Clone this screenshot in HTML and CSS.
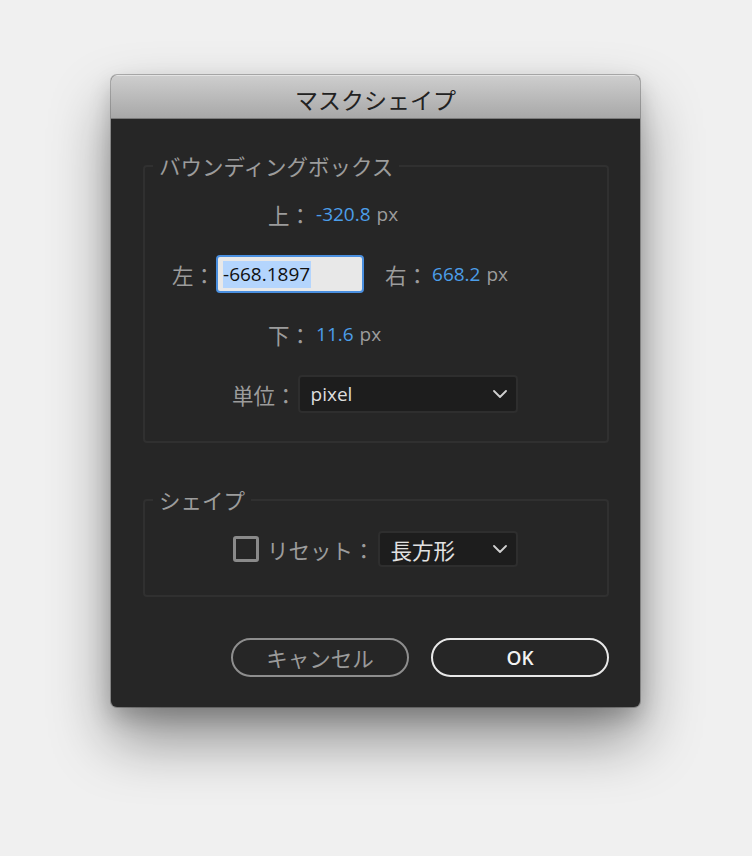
FILE: index.html
```html
<!DOCTYPE html>
<html lang="ja">
<head>
<meta charset="utf-8">
<title>マスクシェイプ</title>
<link rel="stylesheet" href="styles.css">
</head>
<body>
<div class="window">
  <div class="titlebar">マスクシェイプ</div>
  <div class="content">
    <fieldset class="group group-bbox">
      <legend class="group-label">バウンディングボックス</legend>
      <div class="row row-top">
        <span class="label">上：</span><span class="value">-320.8</span><span class="unit">px</span>
      </div>
      <div class="row row-mid">
        <span class="label label-left">左：</span>
        <div class="field"><span class="sel">-668.1897</span></div>
        <span class="label label-right">右：</span><span class="value">668.2</span><span class="unit">px</span>
      </div>
      <div class="row row-bottom">
        <span class="label">下：</span><span class="value">11.6</span><span class="unit">px</span>
      </div>
      <div class="row row-unit">
        <span class="label label-unit">単位：</span>
        <div class="select select-unit">
          <span class="select-text latin">pixel</span>
          <svg class="chevron" width="14" height="8" viewBox="0 0 14 8"><polyline points="1,1 7,7 13,1" fill="none" stroke="#d0d0d0" stroke-width="1.8" stroke-linecap="round" stroke-linejoin="round"/></svg>
        </div>
      </div>
    </fieldset>
    <fieldset class="group group-shape">
      <legend class="group-label">シェイプ</legend>
      <div class="row row-reset">
        <span class="checkbox"></span>
        <span class="label label-reset">リセット：</span>
        <div class="select select-shape">
          <span class="select-text">長方形</span>
          <svg class="chevron" width="14" height="8" viewBox="0 0 14 8"><polyline points="1,1 7,7 13,1" fill="none" stroke="#d0d0d0" stroke-width="1.8" stroke-linecap="round" stroke-linejoin="round"/></svg>
        </div>
      </div>
    </fieldset>
    <div class="buttons">
      <button class="btn btn-cancel">キャンセル</button>
      <button class="btn btn-ok">OK</button>
    </div>
  </div>
</div>
</body>
</html>
```
FILE: styles.css
```css
html, body {
  margin: 0;
  padding: 0;
}
body {
  background: #f0f0f0;
  font-family: "Open Sans", "Noto Sans CJK JP", sans-serif;
  width: 752px;
  height: 856px;
  overflow: hidden;
}
.window {
  width: 529px;
  margin: 75px 0 0 111px;
  background: #262626;
  border-radius: 6px;
  overflow: hidden;
  box-shadow: 0 0 0 1px rgba(0, 0, 0, 0.25), 0 32px 60px rgba(0, 0, 0, 0.42), 0 10px 22px rgba(0, 0, 0, 0.18);
}
.titlebar {
  height: 38px;
  padding-top: 5px;
  line-height: 38px;
  border-bottom: 1px solid #7a7a7a;
  background: linear-gradient(#cecece, #a8a8a8);
  box-shadow: inset 0 1px 0 rgba(255, 255, 255, 0.45);
  text-align: center;
  font-family: "Noto Sans CJK JP", sans-serif;
  font-size: 23px;
  color: #222;
}
.content {
  padding: 35px 31px 30px 32px;
}
.group {
  margin: 0;
  padding: 0 0 28px 0;
  border: 2px solid #303030;
  border-radius: 4px;
  min-width: 0;
}
.group-shape {
  margin-top: 45px;
}
.group-label {
  margin-left: 8px;
  padding: 0 6px;
  font-family: "Noto Sans CJK JP", sans-serif;
  font-size: 21.5px;
  line-height: 24px;
  color: #9c9c9c;
}
.row {
  display: flex;
  align-items: center;
}
.row-top, .row-bottom {
  height: 36px;
  margin-top: 23px;
  padding-left: 123px;
}
.row-top {
  margin-top: 18px;
}
.row-mid {
  height: 38px;
  margin-top: 23px;
  padding-left: 27px;
}
.row-unit {
  height: 38px;
  margin-top: 23px;
  padding-left: 87px;
}
.row-reset {
  height: 36px;
  margin-top: 19px;
  padding-left: 88px;
}
.label {
  font-family: "Noto Sans CJK JP", sans-serif;
  font-size: 21.5px;
  color: #9c9c9c;
  margin-right: 5px;
  white-space: nowrap;
}
.label-left {
  margin-right: 1px;
}
.label-unit {
  margin-right: 1px;
}
.label-right {
  margin-left: 21px;
  margin-right: 4px;
}
.label-reset {
  margin-left: 8px;
  margin-right: 3px;
}
.value {
  font-size: 19px;
  color: #4c9ee9;
}
.unit {
  font-size: 19px;
  color: #9c9c9c;
  margin-left: 6px;
}
.field {
  box-sizing: border-box;
  width: 148px;
  height: 38px;
  border: 2px solid #4a8fdf;
  border-radius: 4px;
  background: #e8e8e8;
  display: flex;
  align-items: center;
  padding-left: 5px;
}
.sel {
  background: #b4d5fd;
  color: #111;
  font-size: 19px;
  line-height: 27px;
  padding-right: 1px;
}
.select {
  box-sizing: border-box;
  display: flex;
  align-items: center;
  justify-content: space-between;
  background: #1d1d1d;
  border: 2px solid #2e2e2e;
  border-radius: 4px;
  padding: 0 9px 0 11px;
}
.select-unit {
  width: 220px;
  height: 38px;
}
.select-shape {
  width: 140px;
  height: 36px;
}
.select-text {
  font-family: "Noto Sans CJK JP", sans-serif;
  font-size: 21.5px;
  color: #e2e2e2;
}
.select-text.latin {
  font-family: "Open Sans", sans-serif;
  font-size: 19px;
  color: #dedede;
}
.chevron {
  display: block;
}
.checkbox {
  box-sizing: border-box;
  width: 26px;
  height: 26px;
  border: 3px solid #8a8a8a;
  border-radius: 3px;
}
.buttons {
  display: flex;
  justify-content: flex-end;
  gap: 22px;
  margin-top: 41px;
}
.btn {
  box-sizing: border-box;
  width: 178px;
  height: 39px;
  border-radius: 20px;
  background: transparent;
  padding: 0;
  cursor: default;
}
.btn-cancel {
  border: 2px solid #8e8e8e;
  font-family: "Noto Sans CJK JP", sans-serif;
  font-size: 21.5px;
  color: #9a9a9a;
}
.btn-ok {
  border: 2px solid #e8e8e8;
  font-family: "Open Sans", sans-serif;
  font-size: 19px;
  font-weight: 600;
  color: #f2f2f2;
}
```
